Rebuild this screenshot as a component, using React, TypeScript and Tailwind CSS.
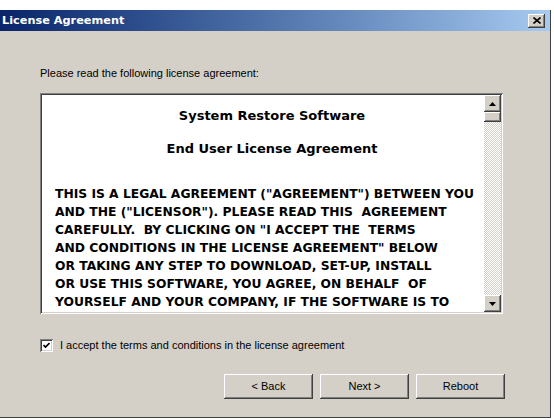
import React, { useState } from 'react';

// Classic Win2000-style bevels
const raised =
  'shadow-[inset_-1px_-1px_#404040,inset_1px_1px_#ffffff,inset_-2px_-2px_#808080,inset_2px_2px_#d4d0c8]';
const sunken =
  'shadow-[inset_1px_1px_#808080,inset_-1px_-1px_#ffffff,inset_2px_2px_#404040,inset_-2px_-2px_#d4d0c8]';

const licenseLines = [
  'THIS IS A LEGAL AGREEMENT ("AGREEMENT") BETWEEN YOU',
  'AND THE ("LICENSOR"). PLEASE READ THIS  AGREEMENT',
  'CAREFULLY.  BY CLICKING ON "I ACCEPT THE  TERMS',
  'AND CONDITIONS IN THE LICENSE AGREEMENT" BELOW',
  'OR TAKING ANY STEP TO DOWNLOAD, SET-UP, INSTALL',
  'OR USE THIS SOFTWARE, YOU AGREE, ON BEHALF  OF',
  'YOURSELF AND YOUR COMPANY, IF THE SOFTWARE IS TO',
  'BE USED FOR BUSINESS PURPOSES (COLLECTIVELY',
];

const Arrow: React.FC<{ up?: boolean }> = ({ up }) => (
  <svg width="7" height="4" viewBox="0 0 7 4">
    <path d={up ? 'M3.5 0L7 4H0z' : 'M0 0h7L3.5 4z'} fill="#000" />
  </svg>
);

const ScrollBar: React.FC = () => (
  <div className="flex flex-col w-[17px] h-full shrink-0">
    <div className={`h-[17px] bg-[#d4d0c8] flex items-center justify-center ${raised}`}>
      <Arrow up />
    </div>
    <div className="flex-1 flex flex-col bg-[repeating-conic-gradient(#d4d0c8_0_25%,#ffffff_0_50%)] bg-[length:2px_2px]">
      <div className={`h-[10px] bg-[#d4d0c8] ${raised}`} />
    </div>
    <div className={`h-[17px] bg-[#d4d0c8] flex items-center justify-center ${raised}`}>
      <Arrow />
    </div>
  </div>
);

const Button: React.FC<{ label: string }> = ({ label }) => (
  <button
    className={`w-[89px] h-[25px] bg-[#d4d0c8] text-[11px] text-black ${raised}`}
    style={{ fontFamily: '"Liberation Sans", Arial, sans-serif' }}
  >
    {label}
  </button>
);

export default function App() {
  const [accepted, setAccepted] = useState(true);

  return (
    <div className="w-[554px] h-[420px] bg-white pt-[10px] overflow-hidden">
      <div className="w-[551px] h-[408px] flex flex-col border-r border-b border-[#404040]">
        {/* title bar */}
        <div className="h-[21px] flex items-center justify-between pl-[2px] pr-[5px] bg-gradient-to-r from-[#0a246a] to-[#a6caf0]">
          <span
            className="text-white font-bold text-[11.3px] leading-none"
            style={{ fontFamily: '"DejaVu Sans", Tahoma, sans-serif' }}
          >
            License Agreement
          </span>
          <div className={`w-[17px] h-[14px] bg-[#d4d0c8] flex items-center justify-center ${raised}`}>
            <svg width="8" height="7" viewBox="0 0 8 7">
              <path d="M0.5 0.5L7.5 6.5M7.5 0.5L0.5 6.5" stroke="#000" strokeWidth="1.6" />
            </svg>
          </div>
        </div>

        {/* body */}
        <div
          className="flex-1 bg-[#d4d0c8] flex flex-col pl-[40px] pr-[45px] pt-[35px]"
          style={{ fontFamily: '"Liberation Sans", Arial, sans-serif' }}
        >
          <p className="text-[11px] leading-[14px] text-black">Please read the following license agreement:</p>

          <div className={`mt-[13px] w-[463px] h-[221px] bg-white p-[2px] flex ${sunken}`}>
            <div
              className="flex-1 overflow-hidden text-black font-bold text-[12.3px] leading-[18px] pt-[12px]"
              style={{ fontFamily: '"DejaVu Sans", Tahoma, sans-serif' }}
            >
              <div className="text-center text-[13px] pl-[18px]">System Restore Software</div>
              <div className="text-center text-[13px] pl-[18px] mt-[15px]">End User License Agreement</div>
              <div className="mt-[27px] pl-[13px]">
                {licenseLines.map((line) => (
                  <div key={line} className="whitespace-pre">
                    {line}
                  </div>
                ))}
              </div>
            </div>
            <ScrollBar />
          </div>

          <label className="mt-[24px] flex items-center gap-[7px] cursor-default">
            <span
              onClick={() => setAccepted(!accepted)}
              className={`w-[13px] h-[13px] bg-white flex items-center justify-center ${sunken}`}
            >
              {accepted && (
                <svg width="7" height="7" viewBox="0 0 7 7">
                  <path d="M0.5 3L2.5 5L6.5 1" stroke="#000" strokeWidth="1.6" fill="none" />
                </svg>
              )}
            </span>
            <span className="text-[11px] leading-[14px] text-black">
              I accept the terms and conditions in the license agreement
            </span>
          </label>

          <div className="mt-[22px] flex justify-end gap-[7px]">
            <Button label="< Back" />
            <Button label="Next >" />
            <Button label="Reboot" />
          </div>
        </div>
      </div>
    </div>
  );
}
